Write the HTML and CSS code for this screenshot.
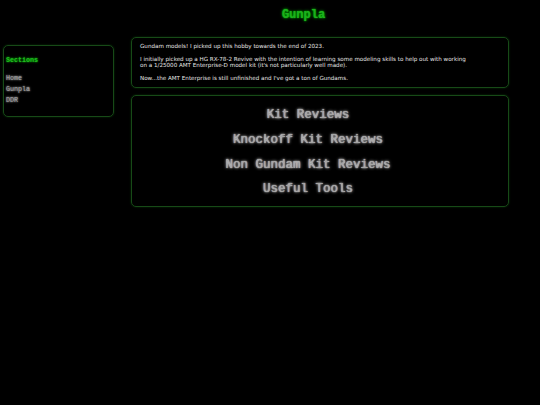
FILE: index.html
```html
<!DOCTYPE html>
<html>
<head>
<meta charset="utf-8">
<title>Gunpla</title>
<link rel="stylesheet" href="styles.css">
</head>
<body>
<header class="header"><h1 class="title">Gunpla</h1></header>
<div class="layout">
  <nav class="sidebar">
    <div class="side-head">Sections</div>
    <ul class="side-list">
      <li><a class="side-link" href="#">Home</a></li>
      <li><a class="side-link" href="#">Gunpla</a></li>
      <li><a class="side-link" href="#">DDR</a></li>
    </ul>
  </nav>
  <main class="main">
    <section class="panel intro">
      <p class="para">Gundam models! I picked up this hobby towards the end of 2023.</p>
      <p class="para">I initially picked up a HG RX-78-2 Revive with the intention of learning some modeling skills to help out with working on a 1/25000 AMT Enterprise-D model kit (it's not particularly well made).</p>
      <p class="para">Now...the AMT Enterprise is still unfinished and I've got a ton of Gundams.</p>
    </section>
    <section class="panel links">
      <a class="big-link" href="#">Kit Reviews</a>
      <a class="big-link" href="#">Knockoff Kit Reviews</a>
      <a class="big-link" href="#">Non Gundam Kit Reviews</a>
      <a class="big-link" href="#">Useful Tools</a>
    </section>
  </main>
</div>
</body>
</html>
```
FILE: styles.css
```css
html, body {
  margin: 0;
  padding: 0;
  background: #000;
  height: 100%;
}
body {
  font-family: "DejaVu Sans", Verdana, sans-serif;
  color: #e6e6e6;
}
.header {
  height: 37px;
  padding-left: 67px;
  display: flex;
  justify-content: center;
  align-items: flex-start;
}
.title {
  margin: 8px 0 0 0;
  font-family: "Liberation Mono", "Courier New", monospace;
  font-weight: bold;
  font-size: 12px;
  line-height: 14px;
  color: #1fae1f;
  text-shadow: 0 0 3px #0b0, 0 0 1px #0d0;
}
.layout {
  display: flex;
  align-items: flex-start;
  padding-left: 3px;
}
.sidebar {
  margin-top: 8px;
  width: 107px;
  height: 60px;
  border: 1px solid #174a17;
  border-radius: 5px;
  box-shadow: 0 0 2px #0a3a0a;
  padding: 10px 0 0 2px;
  box-sizing: content-box;
  font-family: "Liberation Mono", "Courier New", monospace;
  font-size: 6.7px;
}
.side-head {
  color: #22b822;
  font-weight: bold;
  line-height: 9px;
  text-shadow: 0 0 2px #0f0;
}
.side-list {
  list-style: none;
  margin: 8px 0 0 0;
  padding: 0;
}
.side-list li {
  line-height: 11px;
}
.side-link {
  color: #a0a0a0;
  text-decoration: none;
  text-shadow: 0 0 2px #fff;
}
.main {
  margin-left: 17px;
  width: 378px;
  display: flex;
  flex-direction: column;
  gap: 7px;
}
.panel {
  border: 1px solid #174a17;
  border-radius: 5px;
  box-shadow: 0 0 2px #0a3a0a;
}
.intro {
  padding: 5px 8px 6px 8px;
  font-size: 5.6px;
  line-height: 6.3px;
}
.para {
  margin: 0 0 6.5px 0;
  max-width: 332px;
}
.para:last-child {
  margin-bottom: 0;
}
.links {
  padding: 7px 24px 4px 0;
  display: flex;
  flex-direction: column;
  align-items: center;
}
.big-link {
  font-family: "Liberation Mono", "Courier New", monospace;
  font-size: 12.5px;
  line-height: 24.7px;
  color: #a4a4a4;
  text-decoration: none;
  text-shadow: 0 0 3px #fff, 0 0 1px #ddd;
}
```
